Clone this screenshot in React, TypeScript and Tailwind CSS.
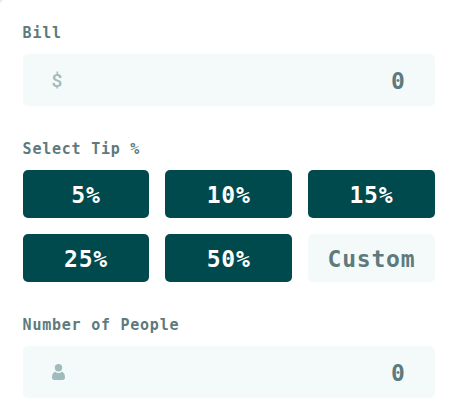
import type { ReactNode } from "react";

const tips = ["5%", "10%", "15%", "25%", "50%"];

function Field({ label, icon }: { label: string; icon: ReactNode }) {
  return (
    <section>
      <label className="block h-6 text-[15px] leading-6 tracking-[0.76px] text-[#5e7a7d]">{label}</label>
      <div className="mt-[9px] flex h-[52px] items-center justify-between rounded-[5px] bg-[#f4faf9] pl-[29px] pr-[30px]">
        {icon}
        <span className="pt-0.5 text-[23px] leading-[36px] text-[#5e7a7d]">0</span>
      </div>
    </section>
  );
}

function Person() {
  return (
    <svg width="13" height="16" viewBox="0 0 13 16" fill="#9ebbbd">
      <circle cx="6.5" cy="3.8" r="3.7" />
      <path d="M3.1 7.8C1 8.3 0 10.5 0 13.3C0 15.1.9 16 2.5 16h8c1.6 0 2.5-.9 2.5-2.7C13 10.5 12 8.3 9.9 7.8C8.9 8.6 7.8 9 6.5 9S4.1 8.600 3.100 7.800Z" />
    </svg>
  );
}

export default function App() {
  return (
    <div className="h-[412px] w-[452px] overflow-hidden bg-[#e7edec] font-['DejaVu_Sans_Mono',monospace] font-bold">
      <main className="h-full rounded-tl-[5px] bg-white pl-[22.6px] pr-[17.2px] pt-[21px]">
        <Field
          label="Bill"
          icon={<span className="pt-0.5 font-['Roboto',sans-serif] text-[19px] font-medium leading-[18px] text-[#9ebbbd]">$</span>}
        />
        <section className="mt-[31px]">
          <h2 className="h-6 text-[15px] leading-6 tracking-[0.76px] text-[#5e7a7d]">Select Tip %</h2>
          <div className="mt-[9px] grid grid-cols-3 gap-4">
            {tips.map((tip) => (
              <button key={tip} className="h-12 rounded-[5px] bg-[#00494d] pt-[3px] text-[23px] tracking-[0.8px] text-white">
                {tip}
              </button>
            ))}
            <button className="h-12 rounded-[5px] bg-[#f4faf9] pt-[3px] text-[23px] tracking-[0.8px] text-[#5e7a7d]">Custom</button>
          </div>
        </section>
        <div className="mt-[31px]">
          <Field label="Number of People" icon={<Person />} />
        </div>
      </main>
    </div>
  );
}
